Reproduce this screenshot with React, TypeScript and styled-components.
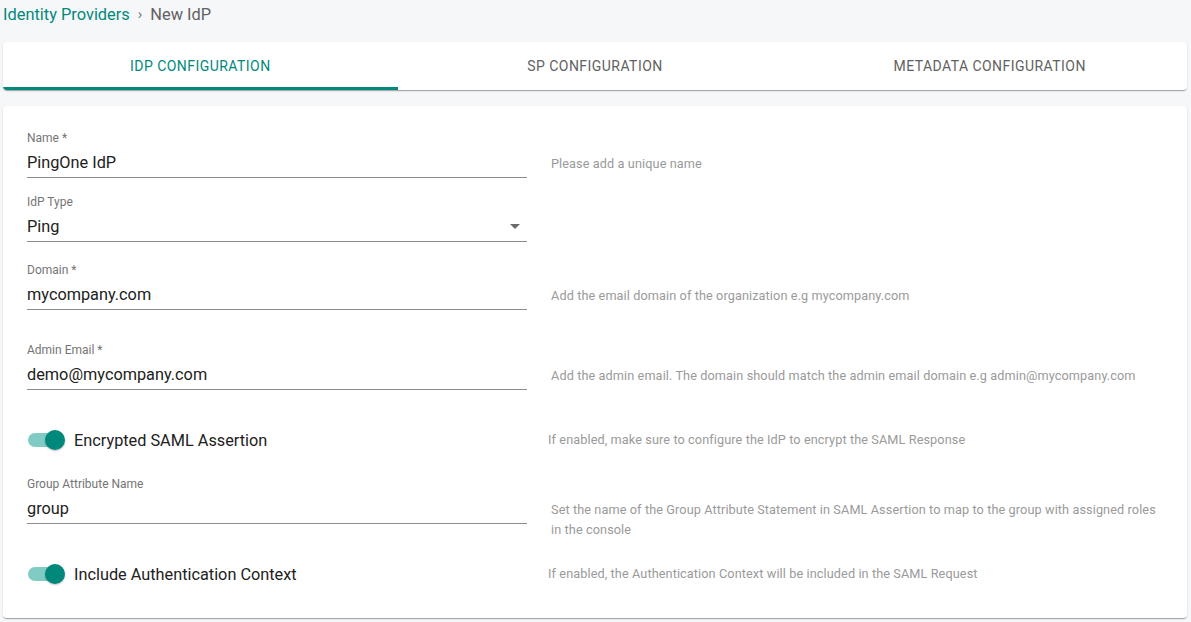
import styled, { createGlobalStyle } from "styled-components";

const GlobalStyle = createGlobalStyle`
  html, body {
    margin: 0;
    padding: 0;
    background: #f6f7f9;
    font-family: Roboto, "Noto Sans", Arial, sans-serif;
  }
  * { box-sizing: border-box; }
`;

const Page = styled.div`
  padding: 0 4px 0 3px;
  width: 1191px;
  height: 622px;
  overflow: hidden;
`;

const Breadcrumb = styled.div`
  height: 28px;
  display: flex;
  align-items: center;
  font-size: 16.4px;
  color: #616161;
  gap: 8px;
  a {
    color: #00897b;
    text-decoration: none;
  }
  .sep {
    font-size: 15px;
    color: #757575;
  }
`;

const TabBar = styled.div`
  margin-top: 14px;
  height: 48px;
  display: flex;
  background: #fff;
  border-radius: 4px;
  box-shadow: 0 2px 1px -1px rgba(0, 0, 0, 0.2), 0 1px 1px 0 rgba(0, 0, 0, 0.14),
    0 1px 3px 0 rgba(0, 0, 0, 0.08);
  overflow: hidden;
`;

const Tab = styled.div<{ $active?: boolean }>`
  flex: 1;
  display: flex;
  align-items: center;
  justify-content: center;
  font-size: 14px;
  letter-spacing: 0.45px;
  text-transform: uppercase;
  color: ${(p) => (p.$active ? "#00897b" : "#616161")};
  border-bottom: 3px solid ${(p) => (p.$active ? "#00897b" : "transparent")};
  padding-top: 3px;
`;

const FormCard = styled.div`
  margin-top: 16px;
  background: #fff;
  border-radius: 4px;
  padding: 24px 24px 32px;
  box-shadow: 0 2px 1px -1px rgba(0, 0, 0, 0.2), 0 1px 1px 0 rgba(0, 0, 0, 0.14),
    0 1px 3px 0 rgba(0, 0, 0, 0.08);
`;

const Row = styled.div<{ $gap: number; $toggle?: boolean }>`
  display: grid;
  grid-template-columns: 500px 1fr;
  column-gap: ${(p) => (p.$toggle ? 21 : 24)}px;
  margin-top: ${(p) => p.$gap}px;
  align-items: ${(p) => (p.$toggle ? "center" : "start")};
`;

const Field = styled.div`
  display: flex;
  flex-direction: column;
`;

const Label = styled.label`
  font-size: 12px;
  line-height: 16px;
  color: #757575;
`;

const InputLine = styled.div`
  height: 32px;
  display: flex;
  align-items: center;
  justify-content: space-between;
  border-bottom: 1px solid #8c8c8c;
  font-size: 16.3px;
  color: #212121;
  padding-top: 1px;
`;

const Caret = styled.span`
  width: 0;
  height: 0;
  margin-right: 7px;
  border-left: 5px solid transparent;
  border-right: 5px solid transparent;
  border-top: 5px solid #6b6b6b;
`;

const Helper = styled.div<{ $toggle?: boolean }>`
  font-size: 12.7px;
  line-height: 20px;
  letter-spacing: 0.1px;
  color: #9a9a9a;
  margin-top: ${(p) => (p.$toggle ? 0 : 24)}px;
`;

const ToggleWrap = styled.div`
  display: flex;
  align-items: center;
  height: 24px;
  padding-left: 1px;
`;

const Switch = styled.span`
  position: relative;
  width: 34px;
  height: 14px;
  border-radius: 7px;
  background: #80cbc4;
  margin-right: 12px;
  &::after {
    content: "";
    position: absolute;
    right: -3px;
    top: -3px;
    width: 20px;
    height: 20px;
    border-radius: 50%;
    background: #00897b;
    box-shadow: 0 1px 2px rgba(0, 0, 0, 0.25);
  }
`;

const ToggleLabel = styled.span`
  font-size: 16.3px;
  color: #212121;
`;

type TextRowProps = {
  gap: number;
  label: string;
  value: string;
  helper?: string;
  select?: boolean;
};

const TextRow = ({ gap, label, value, helper, select }: TextRowProps) => (
  <Row $gap={gap}>
    <Field>
      <Label>{label}</Label>
      <InputLine>
        <span>{value}</span>
        {select && <Caret />}
      </InputLine>
    </Field>
    {helper ? <Helper>{helper}</Helper> : <div />}
  </Row>
);

const ToggleRow = ({ gap, label, helper }: { gap: number; label: string; helper: string }) => (
  <Row $gap={gap} $toggle>
    <ToggleWrap>
      <Switch />
      <ToggleLabel>{label}</ToggleLabel>
    </ToggleWrap>
    <Helper $toggle>{helper}</Helper>
  </Row>
);

export default function App() {
  return (
    <>
      <GlobalStyle />
      <Page>
        <Breadcrumb>
          <a href="#">Identity Providers</a>
          <span className="sep">›</span>
          <span>New IdP</span>
        </Breadcrumb>

        <TabBar>
          <Tab $active>IdP Configuration</Tab>
          <Tab>SP Configuration</Tab>
          <Tab>Metadata Configuration</Tab>
        </TabBar>

        <FormCard>
          <TextRow gap={0} label="Name *" value="PingOne IdP" helper="Please add a unique name" />
          <TextRow gap={16} label="IdP Type" value="Ping" select />
          <TextRow
            gap={20}
            label="Domain *"
            value="mycompany.com"
            helper="Add the email domain of the organization e.g mycompany.com"
          />
          <TextRow
            gap={32}
            label="Admin Email *"
            value="demo@mycompany.com"
            helper="Add the admin email. The domain should match the admin email domain e.g admin@mycompany.com"
          />
          <ToggleRow
            gap={38}
            label="Encrypted SAML Assertion"
            helper="If enabled, make sure to configure the IdP to encrypt the SAML Response"
          />
          <TextRow
            gap={24}
            label="Group Attribute Name"
            value="group"
            helper="Set the name of the Group Attribute Statement in SAML Assertion to map to the group with assigned roles in the console"
          />
          <ToggleRow
            gap={22}
            label="Include Authentication Context"
            helper="If enabled, the Authentication Context will be included in the SAML Request"
          />
        </FormCard>
      </Page>
    </>
  );
}
